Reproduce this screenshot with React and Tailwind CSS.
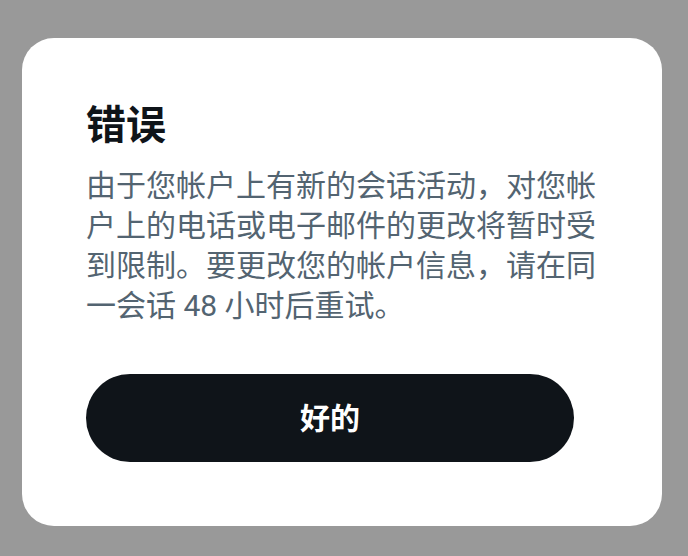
import React from "react";

const App = () => {
  return (
    <div
      className="w-full h-screen bg-[#999999] pt-[38px] pl-[22px]"
      style={{ fontFamily: 'Roboto, "Noto Sans CJK SC", sans-serif' }}
    >
      {/* Dialog card */}
      <div className="w-[640px] bg-white rounded-[32px] p-16">
        <h1 className="text-[40px] leading-[48px] font-bold text-[#0f1419]">
          错误
        </h1>
        <p className="mt-4 text-[30px] leading-[40px] text-[#536471]">
          由于您帐户上有新的会话活动，对您帐户上的电话或电子邮件的更改将暂时受到限制。要更改您的帐户信息，请在同一会话 48 小时后重试。
        </p>
        <button className="mt-12 w-[488px] h-[88px] rounded-full bg-[#0f1419] text-white text-[30px] font-bold flex items-center justify-center">
          好的
        </button>
      </div>
    </div>
  );
};

export default App;
